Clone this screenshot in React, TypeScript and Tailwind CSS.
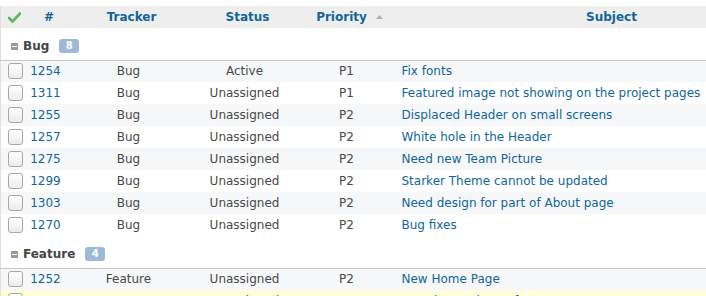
import React from 'react';

type Issue = {
  id: number;
  tracker: string;
  status: string;
  priority: string;
  subject: string;
};

const groups: { name: string; count: number; issues: Issue[] }[] = [
  {
    name: 'Bug',
    count: 8,
    issues: [
      { id: 1254, tracker: 'Bug', status: 'Active', priority: 'P1', subject: 'Fix fonts' },
      { id: 1311, tracker: 'Bug', status: 'Unassigned', priority: 'P1', subject: 'Featured image not showing on the project pages' },
      { id: 1255, tracker: 'Bug', status: 'Unassigned', priority: 'P2', subject: 'Displaced Header on small screens' },
      { id: 1257, tracker: 'Bug', status: 'Unassigned', priority: 'P2', subject: 'White hole in the Header' },
      { id: 1275, tracker: 'Bug', status: 'Unassigned', priority: 'P2', subject: 'Need new Team Picture' },
      { id: 1299, tracker: 'Bug', status: 'Unassigned', priority: 'P2', subject: 'Starker Theme cannot be updated' },
      { id: 1303, tracker: 'Bug', status: 'Unassigned', priority: 'P2', subject: 'Need design for part of About page' },
      { id: 1270, tracker: 'Bug', status: 'Unassigned', priority: 'P2', subject: 'Bug fixes' },
    ],
  },
  {
    name: 'Feature',
    count: 4,
    issues: [
      { id: 1252, tracker: 'Feature', status: 'Unassigned', priority: 'P2', subject: 'New Home Page' },
      { id: 1253, tracker: 'Feature', status: 'Unassigned', priority: 'P2', subject: 'Newsletter signup form' },
    ],
  },
];

const Checkbox: React.FC = () => (
  <div className="w-[15px] h-[16px] rounded-[3px] border border-[#a7a7a7] bg-gradient-to-b from-white to-[#ececec]" />
);

const CheckIcon: React.FC = () => (
  <svg width="13" height="11" viewBox="0 0 13 11">
    <path d="M1 6 L4.5 9.5 L12 1.5" fill="none" stroke="#5cb85c" strokeWidth="2.6" strokeLinecap="round" strokeLinejoin="round" />
  </svg>
);

export default function App() {
  let rowIndex = 0;
  return (
    <div className="h-[296px] w-[706px] overflow-hidden bg-white pt-[6px] text-[12px] text-[#484848]" style={{ fontFamily: '"DejaVu Sans", sans-serif' }}>
      <table className="table-fixed w-[826px] border-collapse border-l border-[#e0e0e0]">
        <colgroup>
          <col className="w-[26px]" />
          <col className="w-[38px]" />
          <col className="w-[128px]" />
          <col className="w-[104px]" />
          <col className="w-[100px]" />
          <col className="w-[430px]" />
        </colgroup>
        <thead>
          <tr className="h-[22px] bg-[#eeeeee] font-bold text-[#116699]">
            <th className="pl-[7px] text-left align-middle">
              <CheckIcon />
            </th>
            <th className="pl-[7px] text-center">#</th>
            <th className="pl-[6px] text-center">Tracker</th>
            <th className="pl-[6px] text-center">Status</th>
            <th className="text-center">
              <span className="inline-flex items-center gap-[9px] pl-[6px]">
                Priority
                <svg width="7" height="4" viewBox="0 0 7 4">
                  <path d="M0 4 L3.5 0 L7 4 Z" fill="#b0b0b0" />
                </svg>
              </span>
            </th>
            <th className="text-center">Subject</th>
          </tr>
        </thead>
        <tbody>
          {groups.map((g) => {
            const groupRow = (
              <tr key={g.name} className="h-[32px] border-b border-[#c6c6c6]">
                <td colSpan={6} className="pl-[10px] pt-[5px]">
                  <div className="flex items-center">
                    <span className="w-[7px] h-[7px] bg-[#9a9a9a] flex items-center justify-center">
                      <span className="w-[5px] h-[1px] bg-white" />
                    </span>
                    <span className="ml-[5px] font-bold text-[#444]">{g.name}</span>
                    <span className="ml-[10px] h-[14px] min-w-[20px] px-[6px] rounded-[3px] bg-[#9db9d5] text-white text-[10px] font-bold leading-[14px] text-center">
                      {g.count}
                    </span>
                  </div>
                </td>
              </tr>
            );
            const rows = g.issues.map((issue) => {
              rowIndex += 1;
              const last = issue.id === 1253;
              const bg = last ? 'bg-[#ffffdd]' : rowIndex % 2 === 1 ? 'bg-[#f6f7f8]' : 'bg-white';
              return (
                <tr key={issue.id} className={`h-[22px] ${bg}`}>
                  <td className="pl-[7px]">
                    <Checkbox />
                  </td>
                  <td className="text-center text-[#116699]">{issue.id}</td>
                  <td className="text-center">{issue.tracker}</td>
                  <td className="text-center">{issue.status}</td>
                  <td className="text-center">{issue.priority}</td>
                  <td className="pl-[5px] text-left text-[#116699] whitespace-nowrap">{issue.subject}</td>
                </tr>
              );
            });
            rowIndex = 0;
            return [groupRow, ...rows];
          })}
        </tbody>
      </table>
    </div>
  );
}
